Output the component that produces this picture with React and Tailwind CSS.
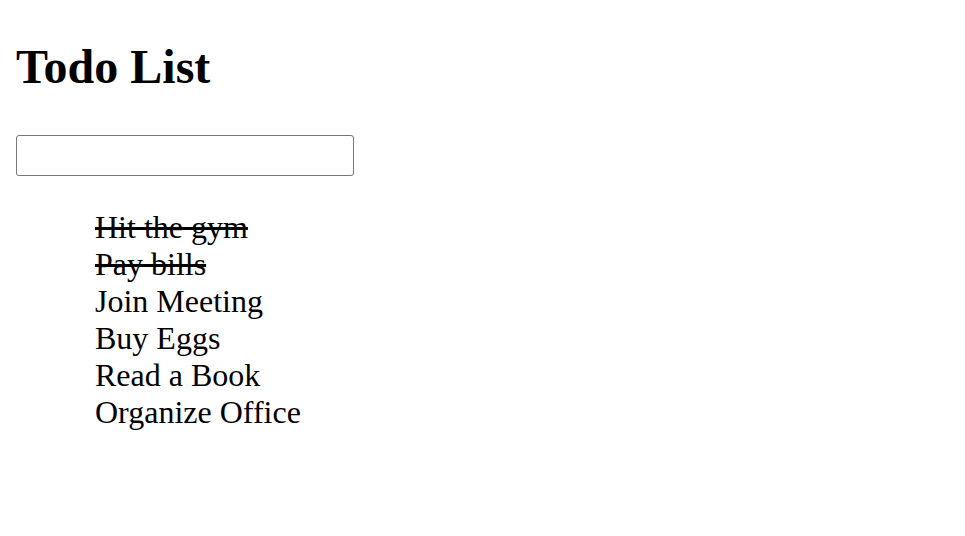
import { useState } from "react";

const initialTodos = [
  { id: 1, text: "Hit the gym", done: true },
  { id: 2, text: "Pay bills", done: true },
  { id: 3, text: "Join Meeting", done: false },
  { id: 4, text: "Buy Eggs", done: false },
  { id: 5, text: "Read a Book", done: false },
  { id: 6, text: "Organize Office", done: false },
];

export default function App() {
  const [todos, setTodos] = useState(initialTodos);
  const [draft, setDraft] = useState("");

  const toggle = (id) =>
    setTodos((list) => list.map((t) => (t.id === id ? { ...t, done: !t.done } : t)));

  const add = (e) => {
    e.preventDefault();
    if (!draft.trim()) return;
    setTodos((list) => [...list, { id: Date.now(), text: draft.trim(), done: false }]);
    setDraft("");
  };

  return (
    <div className="min-h-screen bg-white px-4 text-black" style={{ fontFamily: '"Liberation Serif", "Times New Roman", serif' }}>
      <h1 className="pt-[39px] text-[48px] font-bold leading-[1.15]">Todo List</h1>
      <form onSubmit={add} className="mt-[41px]">
        <input
          value={draft}
          onChange={(e) => setDraft(e.target.value)}
          className="block h-[41px] w-[338px] rounded-[3px] border border-[#767676] px-1 text-[20px] outline-none"
        />
      </form>
      <ul className="mt-[33px] pl-[79px]">
        {todos.map((t) => (
          <li
            key={t.id}
            onClick={() => toggle(t.id)}
            className={`cursor-pointer text-[32px] leading-[37px] ${t.done ? "line-through decoration-[3px]" : ""}`}
          >
            {t.text}
          </li>
        ))}
      </ul>
    </div>
  );
}
